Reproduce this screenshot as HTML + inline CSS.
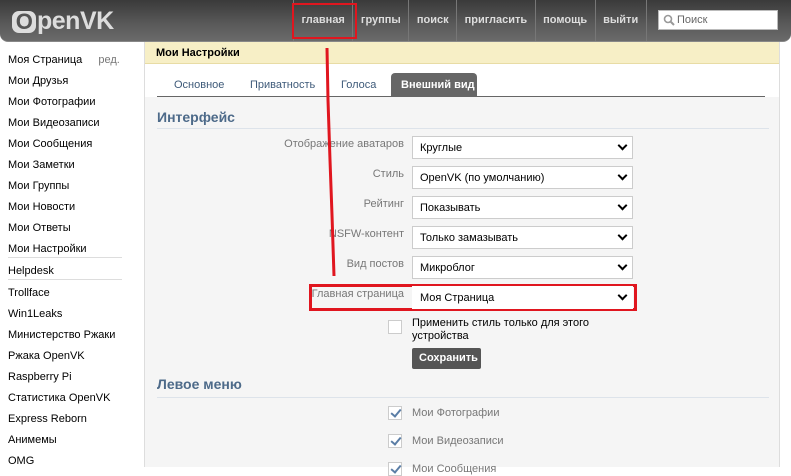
<!DOCTYPE html><html><head><meta charset="utf-8"><style>
*{box-sizing:border-box;margin:0;padding:0}
body{width:791px;height:467px;overflow:hidden;background:#fff;font-family:"Liberation Sans",sans-serif;font-size:11px;color:#000;position:relative}
.hdr{position:absolute;left:0;top:0;width:791px;height:42px;background:linear-gradient(#3a3a3a,#5a5a5a 60%,#6a6a6a);border-radius:0 0 8px 8px;border-bottom:1px solid #888}
.logo{position:absolute;left:12px;top:7px;color:#ddd;font:bold 25px "Liberation Sans",sans-serif;letter-spacing:-0.5px}
.logo b{display:inline-block;background:#ddd;color:#555;border-radius:7px;width:24px;height:22px;text-align:center;line-height:22px;font-size:22px;margin-right:1px}
.nav{position:absolute;left:293px;top:0;height:41px;display:flex}
.nav a{color:#ddd;font-weight:bold;font-size:11px;padding:0 7.5px;line-height:41px;border-left:1px solid #777;text-decoration:none}
.srch{position:absolute;left:658px;top:10px;width:120px;height:20px;background:#fff;border:1px solid #bbb;color:#666;font-size:11px;padding-left:18px;line-height:18px}
.side{position:absolute;left:8px;top:52px;width:130px}
.side div{height:21px;line-height:16px;color:#000;font-size:11px;white-space:nowrap}
.side hr{border:0;border-top:1px solid #ddd;margin:2px 0 5px;width:114px}
.main{position:absolute;left:144px;top:42px;width:636px;height:425px;background:#f5f5f5;border-left:1px solid #ddd;border-right:1px solid #ddd}
.ttl{position:absolute;left:0;top:0;width:100%;height:22px;background:#f7efc6;border-bottom:1px solid #e8dca5;font-weight:bold;padding:5px 11px;font-size:11px}
.tabsw{position:absolute;left:0;top:22px;width:100%;background:#fff;height:33px}
.tabs{position:absolute;left:12px;top:9px;width:608px;border-bottom:1px solid #666;height:24px}
.tabs span{position:absolute;top:6px;color:#3e5a79;font-size:11px;white-space:nowrap}
.tabs .act{top:0;height:23px;background:#666;color:#fff;font-weight:bold;border-radius:4px 4px 0 0;padding:6px 10px}
h3{position:absolute;left:12px;font-size:14px;color:#4d6a89;font-weight:bold}
.ln{position:absolute;left:12px;width:612px;border-top:1px solid #dde3ea}
.lab{position:absolute;right:375px;color:#777;font-size:11px;text-align:right}
.sel{position:absolute;left:267px;width:221px;height:23px;background:#fff;border:1px solid #ccc;font-size:11px;padding:5px 7px;color:#000}
.sel:after{content:"";position:absolute;right:6px;top:5px;width:5px;height:5px;border-right:2px solid #000;border-bottom:2px solid #000;transform:rotate(45deg)}
.cb{position:absolute;left:243px;width:14px;height:14px;border:1px solid #ccc;background:#fff}
.cb.c:after{content:"";position:absolute;left:4px;top:0;width:4px;height:8px;border-right:2px solid #5b7ea6;border-bottom:2px solid #5b7ea6;transform:rotate(40deg)}
.ct{position:absolute;left:267px;color:#777;font-size:11px}
</style></head><body>
<div class="hdr"><div class="logo"><b>O</b>penVK</div>
<div class="nav"><a>главная</a><a>группы</a><a>поиск</a><a>пригласить</a><a>помощь</a><a style="border-right:1px solid #777">выйти</a></div>
<div class="srch"><svg style="position:absolute;left:4px;top:3px" width="12" height="12"><circle cx="5" cy="5" r="3.5" fill="none" stroke="#999" stroke-width="1.6"/><path d="M7.5 7.5L11 11" stroke="#999" stroke-width="2"/></svg>Поиск</div></div>
<div class="side">
<div>Моя Страница <span style="color:#777;margin-left:13px">ред.</span></div><div>Мои Друзья</div><div>Мои Фотографии</div><div>Мои Видеозаписи</div><div>Мои Сообщения</div><div>Мои Заметки</div><div>Мои Группы</div><div>Мои Новости</div><div>Мои Ответы</div><div style="height:14px">Мои Настройки</div>
<hr><div style="height:14px">Helpdesk</div><hr>
<div>Trollface</div><div>Win1Leaks</div><div>Министерство Ржаки</div><div>Ржака OpenVK</div><div>Raspberry Pi</div><div>Статистика OpenVK</div><div>Express Reborn</div><div>Анимемы</div><div>OMG</div>
</div>
<div class="main">
<div class="ttl">Мои Настройки</div>
<div class="tabsw"><div class="tabs"><span style="left:17px">Основное</span><span style="left:93px">Приватность</span><span style="left:184px">Голоса</span><span class="act" style="left:234px;width:86px">Внешний вид</span></div></div>
<h3 style="top:67px">Интерфейс</h3><div class="ln" style="top:86px"></div>
<div class="lab" style="top:96px">Отображение аватаров</div><div class="sel" style="top:94px">Круглые</div>
<div class="lab" style="top:126px">Стиль</div><div class="sel" style="top:124px">OpenVK (по умолчанию)</div>
<div class="lab" style="top:156px">Рейтинг</div><div class="sel" style="top:154px">Показывать</div>
<div class="lab" style="top:186px">NSFW-контент</div><div class="sel" style="top:184px">Только замазывать</div>
<div class="lab" style="top:216px">Вид постов</div><div class="sel" style="top:214px">Микроблог</div>
<div style="position:absolute;left:164px;top:242px;width:328px;height:27px;border:3px solid #e0161f"></div>
<div class="lab" style="top:246px">Главная страница</div><div class="sel" style="top:244px;border-color:#fff">Моя Страница</div>
<div class="cb" style="top:278px"></div><div style="position:absolute;left:267px;top:275px;font-size:11px;line-height:13px;width:200px">Применить стиль только для этого устройства</div>
<div style="position:absolute;left:267px;top:306px;width:69px;height:21px;background:#555;border-radius:2px;color:#fff;font-weight:bold;font-size:11px;padding:4px 7px">Сохранить</div>
<h3 style="top:334px">Левое меню</h3><div class="ln" style="top:355px"></div>
<div class="cb c" style="top:364px"></div><div class="ct" style="top:365px">Мои Фотографии</div>
<div class="cb c" style="top:392px"></div><div class="ct" style="top:393px">Мои Видеозаписи</div>
<div class="cb c" style="top:420px"></div><div class="ct" style="top:421px">Мои Сообщения</div>
</div>
<div style="position:absolute;left:292px;top:3px;width:65px;height:36px;border:2px solid #e0161f"></div>
<svg style="position:absolute;left:0;top:0" width="791" height="467"><path d="M327 48 L328 100 L330 160 L332 215 L334 276" stroke="#e0161f" stroke-width="3" fill="none"/></svg>
</body></html>
